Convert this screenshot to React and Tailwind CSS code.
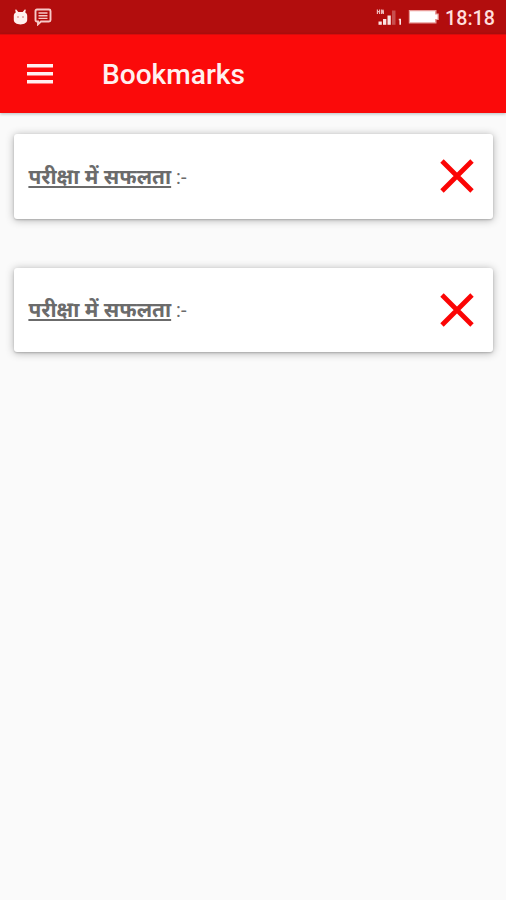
import React from "react";

const bookmarks = [
  { id: 1, title: "परीक्षा में सफलता" },
  { id: 2, title: "परीक्षा में सफलता" },
];

function StatusBar() {
  return (
    <div className="h-[34px] flex items-center justify-between bg-[#b20d0d] text-white pl-[13px] pr-[11px]">
      <div className="flex items-center gap-[6px]">
        {/* Debug bridge */}
        <svg width="15" height="16" viewBox="0 0 15 16" fill="#fff0ee">
          <path d="M3 .3 5.3 3h4.4L12 .3l.8.7-.6 2.6c1.4.7 2 1.9 2 3.4v3.8c0 2.8-2.7 4.6-6.7 4.6S.8 13.6.8 10.8V7c0-1.5.6-2.7 2-3.4L2.2 1z" />
          <circle cx="5" cy="8" r="0.8" fill="#d06a68" />
          <circle cx="10" cy="8" r="0.8" fill="#d06a68" />
        </svg>
        <svg width="18" height="18" viewBox="0 0 18 18" fill="none" stroke="#f7c9c7">
          <path d="M3 1.5h12q1.5 0 1.5 1.5v9q0 1.5-1.5 1.5H7L4 16.3v-2.8H3Q1.5 13.5 1.5 12V3Q1.5 1.5 3 1.5z" strokeWidth="1.9" />
          <path d="M4.5 5h9M4.5 7.7h9M4.5 10.4h9" strokeWidth="1.4" />
        </svg>
      </div>

      <div className="flex items-center">
        <svg width="26" height="18" viewBox="0 0 26 18" fill="#fbe4e3">
          <path d="M.8 1.5H2V3h1V1.5h1.2V6H3V4.3H2V6H.8zM5 1.5h1.5l.6 1.3.5-1.3H8V6H6.900V4.5L6.300 6H5z" opacity=".8" />
          <rect x="2.5" y="13.5" width="3.3" height="3.3" />
          <rect x="7" y="11" width="3.3" height="5.8" />
          <rect x="11.5" y="7.5" width="3.3" height="9.3" />
          <rect x="16" y="2.5" width="3.5" height="14.3" opacity=".3" />
          <path d="M22.8 10.8H25v6h-1.6v-4.5h-.6z" />
        </svg>
        <svg className="ml-[6px]" width="32" height="17" viewBox="0 0 32 17">
          <path d="M.8 2h27.7v3.5h2.3V12h-2.3v3.5H.8z" fill="#e99c99" />
          <path d="M2 3.2h25v3.3h2.5V11H27v3.3H2z" fill="#fff" />
        </svg>
        <span className="ml-[5px] mt-[3px] w-[50px] whitespace-nowrap font-[Roboto] text-[19.7px] font-medium leading-none text-[#ffdedc]">18:18</span>
      </div>
    </div>
  );
}

function AppBar() {
  return (
    <header className="relative h-[79px] flex items-center bg-[#fb0a0a] pl-[27px] border-t border-[#dc0b0b] shadow-[0_1px_3px_rgba(0,30,40,0.28)]">
      <button type="button" aria-label="Menu">
        <svg width="26" height="20" viewBox="0 0 26 20" fill="#fff0ef">
          <rect y="0" width="26" height="3.5" />
          <rect y="8" width="26" height="3.5" />
          <rect y="16" width="26" height="3.5" />
        </svg>
      </button>
      <h1 className="ml-[49px] mt-[3px] font-[Roboto] text-[28.1px] font-medium leading-none text-[#fff0ef]">Bookmarks</h1>
    </header>
  );
}

function BookmarkCard({ title }) {
  return (
    <div className="h-[84.5px] flex items-center justify-between rounded-[3px] bg-white pl-[14px] pr-[18.5px] shadow-[0_1px_8px_rgba(0,0,0,0.3),0_1px_2px_rgba(0,0,0,0.18)]">
      <p className="font-['Noto_Sans','Noto_Sans_Devanagari',sans-serif] text-[20.9px] leading-none text-[#6b6b6b]">
        <span className="font-bold underline decoration-2 underline-offset-[2px] [text-decoration-skip-ink:none]">{title}</span>
        <span className="font-[Roboto] text-[20px]"> :-</span>
      </p>
      <button type="button" aria-label="Remove">
        <svg width="34" height="34" viewBox="0 0 34 34" fill="none" stroke="#fb0505" strokeWidth="4.8">
          <path d="M2 2 32 32M32 2 2 32" />
        </svg>
      </button>
    </div>
  );
}

export default function App() {
  return (
    <div className="min-h-screen bg-[#fafafa]">
      <StatusBar />
      <AppBar />
      <main className="flex flex-col gap-[49px] pt-[21px] pl-[14.4px] pr-[13.4px]">
        {bookmarks.map((item) => (
          <BookmarkCard key={item.id} title={item.title} />
        ))}
      </main>
    </div>
  );
}
